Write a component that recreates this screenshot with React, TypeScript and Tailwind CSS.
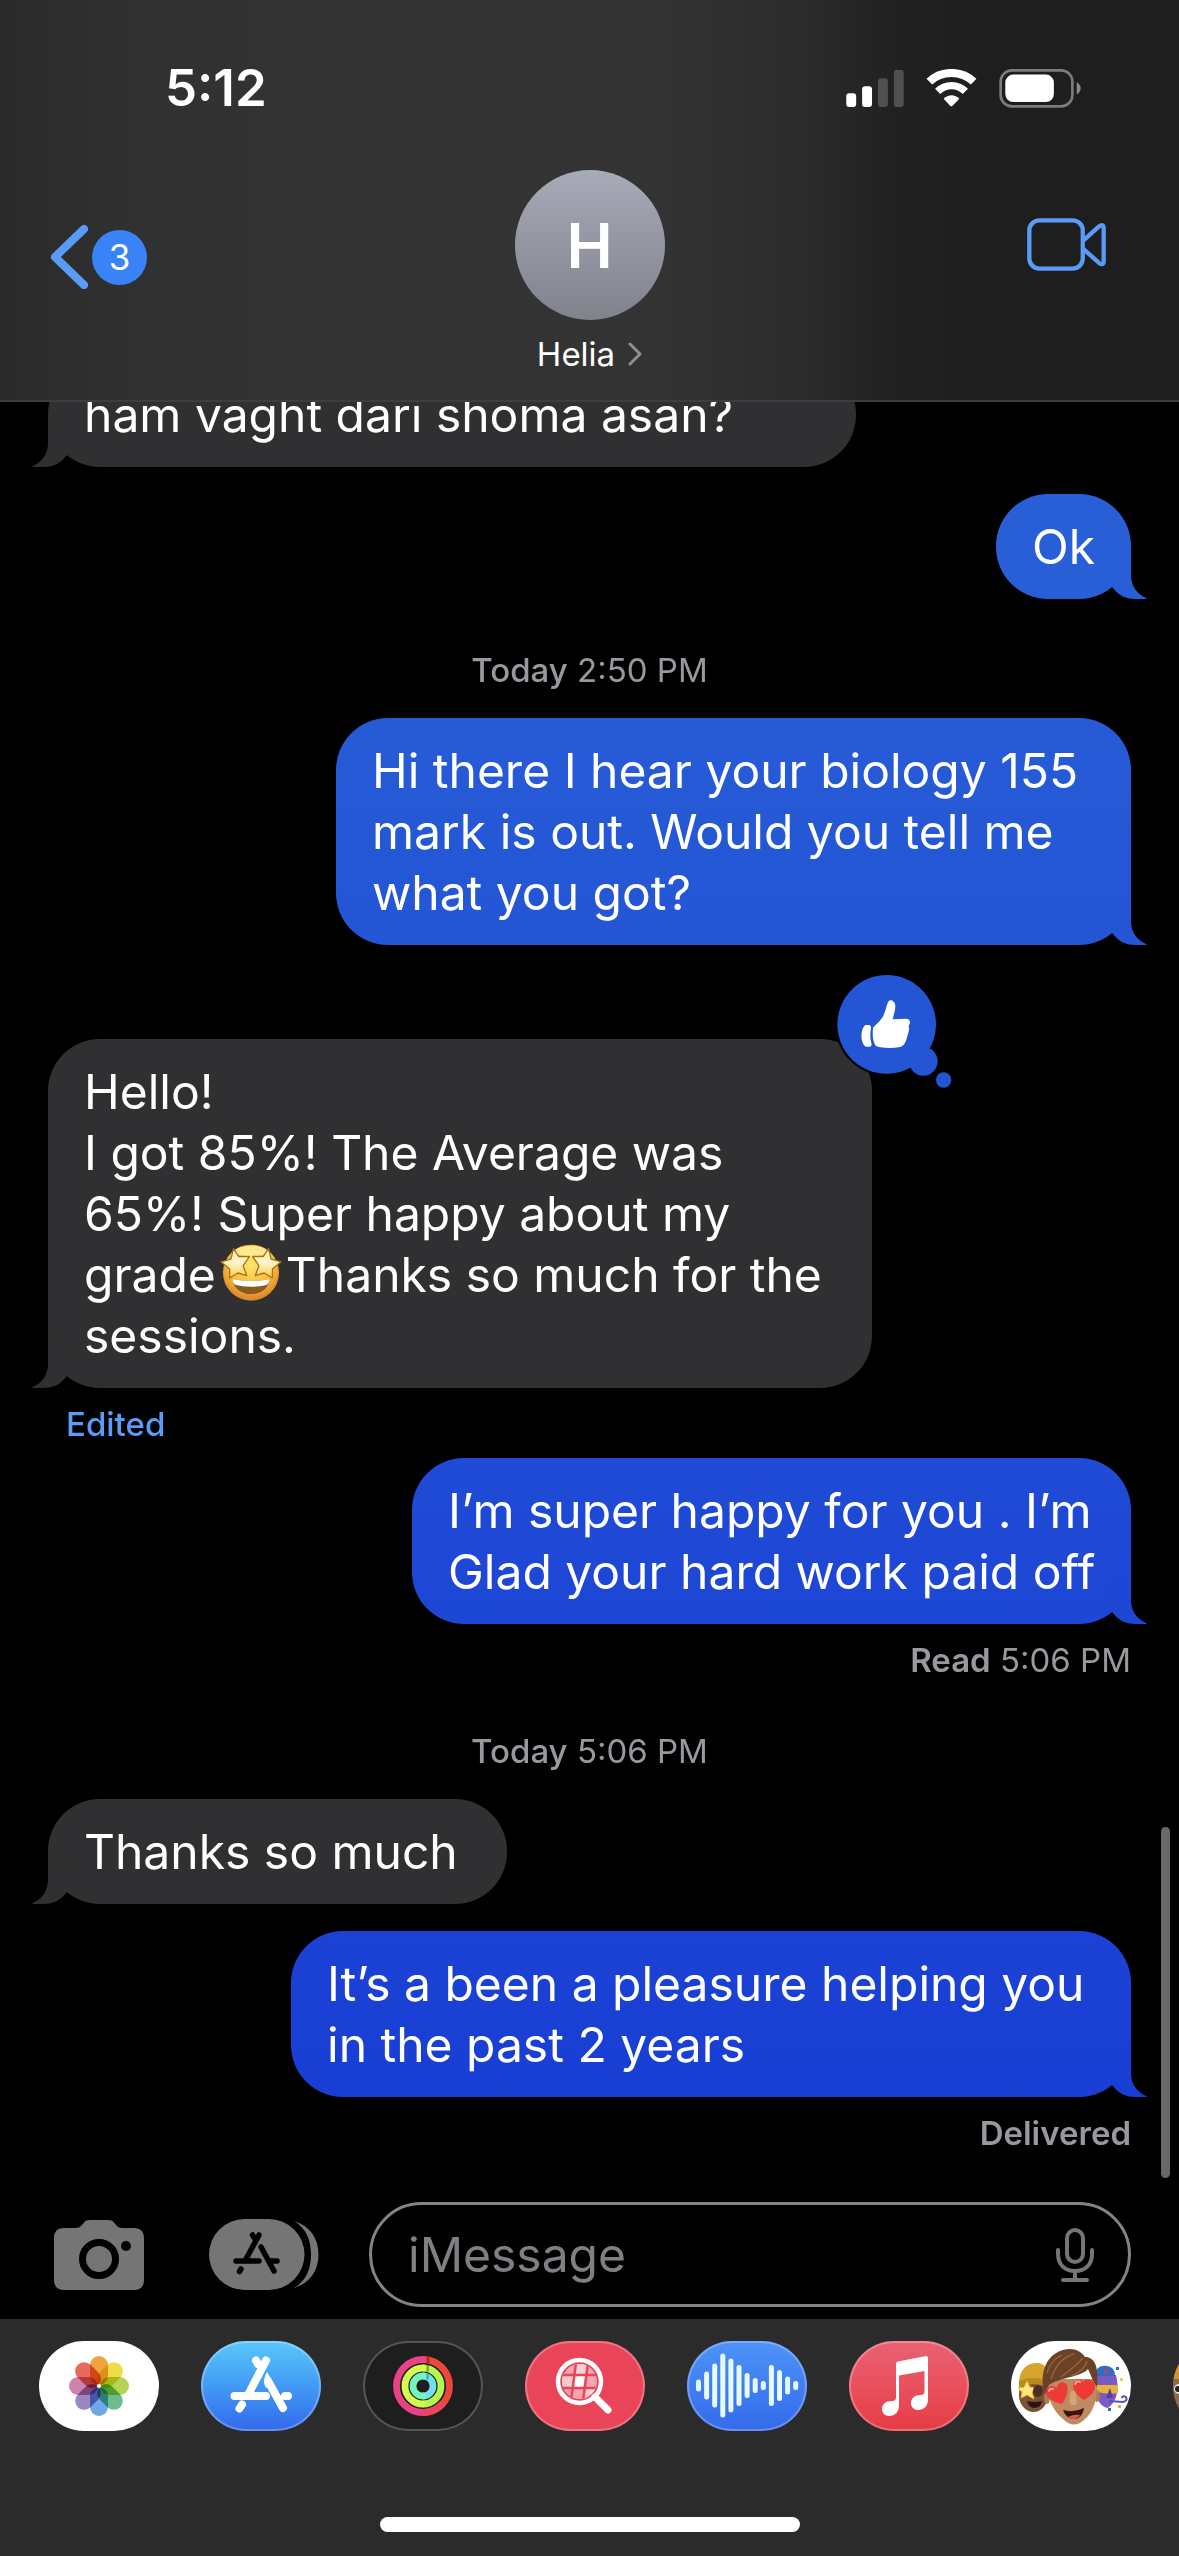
import type { ReactNode } from "react";

type Side = "in" | "out";

function Tail({ side, color }: { side: Side; color: string }) {
  return (
    <svg
      viewBox="0 0 40 50"
      aria-hidden="true"
      className={
        side === "in"
          ? `absolute bottom-0 -left-4 h-[50px] w-10 ${color}`
          : `absolute -right-4 bottom-0 h-[50px] w-10 -scale-x-100 ${color}`
      }
    >
      <path d="M16 0V26C16 37 10 45 1 49C0 49.600 0 50 1 50H11C21 50 28 47 35 38L40 10Z" fill="currentColor" />
    </svg>
  );
}

function Bubble({
  side,
  bg,
  tail,
  width = "",
  children,
}: {
  side: Side;
  bg: string;
  tail: string;
  width?: string;
  children: ReactNode;
}) {
  return (
    <div
      className={`relative rounded-[52px] px-9 py-[22px] text-[48px] leading-[61px] whitespace-nowrap text-white ${
        side === "in" ? "self-start" : "self-end"
      } ${bg} ${width}`}
    >
      <Tail side={side} color={tail} />
      <div className="relative">{children}</div>
    </div>
  );
}

function StarStruck() {
  return (
    <svg viewBox="600 16 188 176" role="img" aria-label="star-struck face" className="mx-1 inline-block h-[58px] w-[62px] align-[-10px]">
      <defs>
        <radialGradient id="face" cx="0.5" cy="0.35" r="0.65">
          <stop offset="0" stopColor="#ffe66b" />
          <stop offset="0.6" stopColor="#f7bd3a" />
          <stop offset="1" stopColor="#d9822b" />
        </radialGradient>
        <linearGradient id="star" x1="0" y1="0" x2="0" y2="1">
          <stop offset="0" stopColor="#fff6b4" />
          <stop offset="0.5" stopColor="#fdf3c8" />
          <stop offset="1" stopColor="#f5cf3e" />
        </linearGradient>
      </defs>
      <circle cx="694" cy="103" r="85" fill="url(#face)" />
      <ellipse cx="694" cy="38" rx="48" ry="16" fill="#fff0a0" opacity="0.8" />
      <path d="M638 122C670 130 720 130 750 122C749 150 724 168 694 168C664 168 639 150 638 122Z" fill="#8b5a1e" />
      <path d="M638 122C670 130 720 130 750 122C750 130 746 138 742 140C715 148 673 148 646 140C641 136 638 130 638 122Z" fill="#fff" />
      <path d="M641 30L657 54L689 54L670 82L681 112L654 104L629 119L629 92L603 70L633 62Z" fill="url(#star)" stroke="#a96f1a" strokeWidth="4" strokeLinejoin="round" />
      <path d="M747 30L755 62L785 70L759 92L759 119L734 104L707 112L718 82L699 54L731 54Z" fill="url(#star)" stroke="#a96f1a" strokeWidth="4" strokeLinejoin="round" />
    </svg>
  );
}

function ThumbReaction() {
  return (
    <svg viewBox="45 42 357 354" role="img" aria-label="Liked" className="absolute -top-[66px] -right-[82px] h-[118px] w-[119px]">
      <circle cx="200" cy="196" r="155" fill="#000" />
      <circle cx="200" cy="196" r="148" fill="#2355d5" />
      <circle cx="310" cy="307" r="43" fill="#2355d5" />
      <circle cx="371" cy="363" r="23" fill="#2355d5" />
      <path d="M160 205C175 190 185 181 190 170C198 152 200 136 205 128C212 118 226 126 226 142C226 156 220 170 218 181L260 179C272 180 272 193 266 200C270 216 263 224 261 235C258 248 252 262 240 264C215 269 185 267 170 262C158 254 156 220 160 205Z" fill="#fff" />
      <path d="M136 198H148Q154 199 153 207C150 222 150 238 154 252Q157 262 149 263H138C122 256 119 212 136 198Z" fill="#fff" />
    </svg>
  );
}

function StatusIcons() {
  return (
    <div className="flex items-center gap-[22px]">
      <svg viewBox="78 86 174 112" role="img" aria-label="Signal" className="h-[37px] w-[58px]">
        <rect x="78" y="156" width="30" height="42" rx="9" fill="#fff" />
        <rect x="126" y="135" width="30" height="63" rx="9" fill="#fff" />
        <rect x="174" y="111" width="30" height="87" rx="9" fill="#505052" />
        <rect x="222" y="86" width="30" height="112" rx="9" fill="#505052" />
      </svg>
      <svg viewBox="318 86 153 114" role="img" aria-label="Wi-Fi" className="h-[38px] w-[51px]">
        <path d="M328 124C364 89 424 89 461 124" fill="none" stroke="#fff" strokeWidth="24" />
        <path d="M353 153C376 130 413 130 436 153" fill="none" stroke="#fff" strokeWidth="22" />
        <path d="M371 175C384 161 405 161 418 175L397 197Q394 199 391 197Z" fill="#fff" />
      </svg>
      <svg viewBox="537 84 246 118" role="img" aria-label="Battery" className="h-[39px] w-[82px]">
        <rect x="541" y="88" width="217" height="109" rx="34" fill="none" stroke="#7c7c7c" strokeWidth="8" />
        <path d="M771 124C787 132 787 153 771 161Z" fill="#8a8a8a" />
        <rect x="555" y="101" width="147" height="83" rx="24" fill="#fff" />
      </svg>
    </div>
  );
}

function Header() {
  return (
    <header className="relative z-10 shrink-0 border-b-2 border-[#3e3e40] bg-[linear-gradient(to_right,#2a2a2b_0%,#313131_12%,#343434_35%,#333333_56%,#2b2b2b_68%,#212121_76%,#1e1e1e_84%)] pb-[26px] text-white">
      <div className="flex items-center justify-between pt-[62px] pr-[98px] pl-[165px]">
        <time className="text-[51px] leading-[52px] font-semibold">5:12</time>
        <StatusIcons />
      </div>
      <div className="grid grid-cols-3 pt-14">
        <button type="button" aria-label="Back, 3 unread" className="flex items-center gap-1 self-start pt-[55px] pl-[50px]">
          <svg viewBox="0 0 38 64" aria-hidden="true" className="h-16 w-[38px]">
            <path d="M34 4L5 32L34 60" fill="none" stroke="#5a9bf8" strokeWidth="8" strokeLinecap="round" strokeLinejoin="round" />
          </svg>
          <span className="flex size-[55px] items-center justify-center rounded-full bg-[#3a82f7] text-[35px] leading-[55px]">3</span>
        </button>
        <button type="button" className="flex flex-col items-center gap-[14px]">
          <span className="flex size-[150px] items-center justify-center rounded-full bg-linear-to-b from-[#a8abb8] to-[#80838c] text-[62px] font-semibold">
            H
          </span>
          <span className="flex items-center gap-[13px] text-[33px] leading-10">
            Helia
            <svg viewBox="0 0 14 24" aria-hidden="true" className="h-6 w-[14px]">
              <path d="M2 2L12 12L2 22" fill="none" stroke="#8e8e93" strokeWidth="3" strokeLinecap="round" strokeLinejoin="round" />
            </svg>
          </span>
        </button>
        <button type="button" aria-label="Video call" className="flex justify-end self-start pt-12 pr-[73px]">
          <svg viewBox="621 534 238 159" aria-hidden="true" className="h-[53px] w-[79px]">
            <g fill="none" stroke="#5a9bf8" strokeWidth="13" strokeLinejoin="round">
              <rect x="628" y="541" width="161" height="145" rx="30" />
              <path d="M792 600L838 559Q851 550 852 563V665Q851 678 838 669L792 628" />
            </g>
          </svg>
        </button>
      </div>
    </header>
  );
}

function Stamp({ day, time }: { day: string; time: string }) {
  return (
    <p className="mt-[51px] mb-7 text-center text-[33px] leading-10 text-[#98989f]">
      <span className="font-medium">{day}</span> {time}
    </p>
  );
}

function Messages() {
  return (
    <main className="relative flex min-h-0 flex-1 flex-col justify-end overflow-hidden px-12 pb-[25px]">
      <Bubble side="in" bg="bg-[#303032]" tail="text-[#303032]" width="w-[808px]">
        ham vaght dari shoma asan?
      </Bubble>
      <div className="h-[27px] shrink-0" />
      <Bubble side="out" bg="bg-[#285fd6]" tail="text-[#285fd6]">
        Ok
      </Bubble>
      <Stamp day="Today" time="2:50 PM" />
      <Bubble side="out" bg="bg-linear-to-b from-[#275bd6] to-[#2355d5]" tail="text-[#2355d5]" width="w-[795px]">
        Hi there I hear your biology 155
        <br />
        mark is out. Would you tell me
        <br />
        what you got?
      </Bubble>
      <div className="mt-[94px] flex flex-col">
        <Bubble side="in" bg="bg-[#303032]" tail="text-[#303032]" width="w-[824px]">
          Hello!
          <br />I got 85%! The Average was
          <br />
          65%! Super happy about my
          <br />
          grade
          <StarStruck />
          Thanks so much for the
          <br />
          sessions.
          <span className="absolute -top-[22px] -right-9 block">
            <span className="relative block">
              <ThumbReaction />
            </span>
          </span>
        </Bubble>
      </div>
      <button type="button" className="mt-4 mb-[14px] ml-[18px] self-start text-[33px] leading-10 font-medium text-[#5a9bf8]">
        Edited
      </button>
      <Bubble side="out" bg="bg-linear-to-b from-[#204bd6] to-[#1c46d4]" tail="text-[#1c46d4]" width="w-[719px]">
        I’m super happy for you . I’m
        <br />
        Glad your hard work paid off
      </Bubble>
      <p className="mt-4 self-end text-[33px] leading-10 text-[#98989f]">
        <span className="font-semibold">Read</span> 5:06 PM
      </p>
      <Stamp day="Today" time="5:06 PM" />
      <Bubble side="in" bg="bg-[#303032]" tail="text-[#303032]" width="w-[459px]">
        Thanks so much
      </Bubble>
      <div className="h-[27px] shrink-0" />
      <Bubble side="out" bg="bg-linear-to-b from-[#1b42d5] to-[#183ed3]" tail="text-[#183ed3]" width="w-[840px]">
        It’s a been a pleasure helping you
        <br />
        in the past 2 years
      </Bubble>
      <p className="mt-4 self-end text-[33px] leading-10 font-semibold text-[#98989f]">Delivered</p>
      <div className="absolute right-[9px] bottom-0 h-[351px] w-[9px] rounded-full bg-[#69696b]" />
    </main>
  );
}

function Composer() {
  return (
    <form className="flex shrink-0 items-center pt-6 pr-12 pb-3 pl-[54px]" onSubmit={(e) => e.preventDefault()}>
      <button type="button" aria-label="Camera" className="shrink-0">
        <svg viewBox="0 0 90 70" aria-hidden="true" className="h-[70px] w-[90px]">
          <path d="M10 8H22C26 8 28 5 30 2.500C31.500 .7 33 0 36 0H54C57 0 58.500 .7 60 2.500C62 5 64 8 68 8H80C87 8 90 12 90 18V60C90 67 86 70 80 70H10C4 70 0 67 0 60V18C0 12 3 8 10 8Z" fill="#757575" />
          <circle cx="45" cy="39" r="16.500" fill="none" stroke="#000" strokeWidth="7" />
          <circle cx="72" cy="26" r="5" fill="#000" />
        </svg>
      </button>
      <button type="button" aria-label="Apps" className="ml-[65px] shrink-0">
        <svg viewBox="0 0 110 71" aria-hidden="true" className="h-[71px] w-[110px]">
          <rect width="95.500" height="71" rx="35.500" fill="#757575" />
          <path d="M85 2C101 7 109.500 19 109.500 35.500C109.500 52 101 64 85 69C97 62 102 50 102 35.500C102 21 97 9 85 2Z" fill="#757575" />
          <g stroke="#000" strokeWidth="5.500" strokeLinecap="round" fill="none">
            <path d="M50 16L36 42M43.500 16L46 20M27 42H50M60 42H68M52 28L65 52M32 50L30.500 52.500" />
          </g>
        </svg>
      </button>
      <div className="ml-[50px] flex h-[105px] min-w-0 flex-1 items-center rounded-full border-3 border-[#848488] pr-[34px] pl-9">
        <input
          type="text"
          aria-label="Message"
          placeholder="iMessage"
          className="min-w-0 flex-1 bg-transparent text-[48px] leading-[61px] text-white outline-none placeholder:text-[#7f7f84]"
        />
        <button type="button" aria-label="Dictate" className="shrink-0">
          <svg viewBox="0 0 38 54" aria-hidden="true" className="h-[54px] w-[38px]">
            <g fill="none" stroke="#757577" strokeWidth="4" strokeLinecap="round">
              <rect x="11" y="2" width="16" height="32" rx="8" />
              <path d="M2 22V26C2 37 9 43 19 43C29 43 36 37 36 26V22M19 43V51M7 52H31" />
            </g>
          </svg>
        </button>
      </div>
    </form>
  );
}

const PETALS = ["#eda63f", "#f0dc45", "#b3d455", "#6dbd8c", "#6fa8e6", "#9a86c0", "#cd83ac", "#e56b5d"];

function PhotosIcon() {
  return (
    <svg viewBox="0 0 120 90" aria-hidden="true" className="size-full">
      <g className="isolate">
        {PETALS.map((c, i) => (
          <rect
            key={c}
            x="51"
            y="15"
            width="18"height="29"
            rx="9"
            fill={c}
            transform={`rotate(${i * 45} 60 45)`}
            className="mix-blend-multiply"
          />
        ))}
      </g>
      <circle cx="60" cy="45" r="2" fill="#fff" />
    </svg>
  );
}

function StoreIcon() {
  return (
    <svg viewBox="0 0 120 90" aria-hidden="true" className="size-full">
      <g stroke="#fff" strokeWidth="8" strokeLinecap="round" fill="none">
        <path d="M65 19.500L48 52M55 19.500L57 23M33.500 55H65M84 55H87M67 40L82 67M41 63.500L38.500 67.500" />
      </g>
      <path d="M66 31L72 41L65 47C62 42 63 36 66 31Z" fill="#fff" />
    </svg>
  );
}

function ActivityIcon() {
  return (
    <svg viewBox="0 0 120 90" aria-hidden="true" className="size-full">
      <g fill="none" strokeWidth="6.800">
        <path d="M60 18.500A26.500 26.500 0 0 1 60 71.500" stroke="#ee4738" />
        <path d="M60 71.500A26.500 26.500 0 0 1 60 18.500" stroke="#ea4287" strokeLinecap="round" />
        <path d="M60 71.500A26.500 26.500 0 0 0 80 62" stroke="#ec4463" />
        <path d="M60 27A18 18 0 0 1 60 63" stroke="#b4f74e" />
        <path d="M60 63A18 18 0 0 1 60 27" stroke="#d4fb50" strokeLinecap="round" />
        <path d="M60 35A10 10 0 0 1 60 55" stroke="#70dff0" />
        <path d="M60 55A10 10 0 0 1 60 35" stroke="#75f4bd" strokeLinecap="round" />
      </g>
      <path d="M63.500 15.500h3v6.500h-3z" fill="#8a1d16" opacity="0.6" />
      <path d="M63.500 24h2.500v6.500h-2.500z" fill="#4f7a1c" opacity="0.6" />
      <path d="M63.500 32.500h2v6h-2z" fill="#2b7780" opacity="0.6" />
    </svg>
  );
}

function ImagesIcon() {
  return (
    <svg viewBox="0 0 120 90" aria-hidden="true" className="size-full">
      <defs>
        <clipPath id="globe">
          <circle cx="54.500" cy="40.500" r="17.500" />
        </clipPath>
      </defs>
      <g clipPath="url(#globe)">
        <rect x="36" y="22" width="38" height="38" fill="#f4a5b0" />
        <path d="M50 22H62L60 34H49Z" fill="#fad0d6" />
        <path d="M36 35H48L47 46H36Z" fill="#f8c9d0" />
        <path d="M61 46H74V60H58Z" fill="#f9cdd3" />
        <path d="M49.500 35H60L58.500 46H48Z" fill="#fff" />
        <path d="M36 34H74M36 47H74M51 22L46 60M63 22L58 60" stroke="#ea4459" strokeWidth="2.500" />
      </g>
      <circle cx="54.500" cy="40.500" r="21.500" fill="none" stroke="#fff" strokeWidth="4.500" />
      <path d="M70 56L83 69" stroke="#fff" strokeWidth="7" strokeLinecap="round" />
    </svg>
  );
}

const WAVE = [12, 28, 44, 64, 54, 41, 25, 15, 9, 41, 31, 18, 9];

function WaveIcon() {
  return (
    <svg viewBox="0 0 120 90" aria-hidden="true" className="size-full">
      {WAVE.map((h, i) => (
        <rect key={i} x={9 + i * 8.1} y={44.5 - h / 2} width="5" height={h} rx="2.500" fill="#e6fbff" />
      ))}
    </svg>
  );
}

function MusicIcon() {
  return (
    <svg viewBox="0 0 120 90" aria-hidden="true" className="size-full">
      <path d="M47 23Q47 21 49 20.500L77 15Q79 15 79 17V58C79 65 75 69 69 69C65 69 62 66 62 62C62 57 66 54 71 54C74.500 54 75.500 53 75.500 50V30L50 34.500V64C50 71 46 75 40 75C36 75 33 72 33 68C33 63 37 60 42 60C46 60 47 59 47 56Z" fill="#fff" />
    </svg>
  );
}

function MemojiIcon() {
  return (
    <svg viewBox="0 0 120 90" aria-hidden="true" className="size-full">
      <ellipse cx="22.500" cy="54" rx="14.500" ry="17" fill="#7b5136" />
      <path d="M8 46C7 30 15 22 26 22C34 22 38 28 38 46C28 40 18 40 8 46Z" fill="#d6a32b" />
      <path d="M8 40C16 36 30 36 38 40V47C28 42 18 42 8 47Z" fill="#b98a20" />
      <path d="M16 40L19 46L26 47L21 51L23 58L16 54L10 57L11 51L7 47L13 46Z" fill="#ffe680" stroke="#e3b330" />
      <ellipse cx="27" cy="50" rx="5" ry="6" fill="#4a2f24" />
      <path d="M16 60Q23 62 31 60Q30 67 23 67Q18 67 16 60Z" fill="#2b1512" />
      <path d="M86 34H105C108 46 107 60 97 67C90 66 86 60 85 50Z" fill="#7a5bc4" />
      <path d="M84 35C84 27 90 24 96 25C102 26 104 30 104 35Z" fill="#2f6cc8" />
      <circle cx="95" cy="30.500" r="2" fill="#e0364c" />
      <path d="M86 44H107V52Q98 54 86 51Z" fill="#e7b23c" />
      <path d="M99 47L102 57H95Z" fill="#5b3da6" />
      <path d="M98 60L112 61Q117 60 115 56Q112 54 110.500 57" fill="none" stroke="#5a50b8" strokeWidth="2" />
      <rect x="105" y="26" width="3" height="3" fill="#2f66d8" />
      <rect x="109" y="37" width="3" height="3" fill="#f0cf4e" />
      <rect x="107" y="64" width="3" height="3" fill="#e7a93c" />
      <rect x="97" y="67" width="3" height="3" fill="#2f66d8" />
      <ellipse cx="36" cy="57" rx="3" ry="6" fill="#b07a52" />
      <ellipse cx="86" cy="55" rx="3" ry="6" fill="#b07a52" />
      <path d="M36 38H86C87 56 83 71 74 78Q63 89 52 78C41 69 36 56 36 38Z" fill="#c08a60" />
      <path d="M32 46C30 26 38 13 52 9C62 6 70 10 74 16C84 16 88 26 86 46C82 41 80 34 77 28C70 36 50 36 38 44Q35 50 34 53Z" fill="#6b4127" />
      <path d="M40 38C44 25 52 16 63 13M50 36C58 30 66 24 72 17M60 35C68 32 74 27 76 20M36 32C38 24 44 17 51 14" fill="none" stroke="#95643c" strokeWidth="1.500" />
      <path d="M52 69Q63 72 73 67Q72 76 64 78Q55 78 52 69Z" fill="#3a1512" />
      <path d="M57 76Q63 73 69 74Q66 78 62 78Q59 78 57 76Z" fill="#e0575a" />
      <path d="M60 50Q57 62 60 64H65Q67 62 64 50Z" fill="#d6a277" />
      <path d="M51 63C43 61 35 58 35 51C35 45 42 43 46 47C46 41 53 39 56 44C58 50 55 57 51 63Z" fill="#ee3a34" />
      <path d="M73 59C67 55 61 49 62 43C64 37 70 37 72 41C75 37 82 38 84 44C85 50 79 56 73 59Z" fill="#ee3a34" />
      <path d="M38 50Q39 47 42 48M64 43Q66 39 69 41" fill="none" stroke="#ff9c94" strokeWidth="2" strokeLinecap="round" />
    </svg>
  );
}

function StickerIcon() {
  return (
    <svg viewBox="0 0 120 90" aria-hidden="true" className="size-full">
      <rect width="120" height="90" rx="45" fill="#8a6a50" />
      <path d="M0 38C4 22 14 8 30 4V38Z" fill="#d3932f" />
      <circle cx="6" cy="48" r="5" fill="#e8e8e8" />
      <circle cx="5" cy="48" r="3" fill="#222" />
    </svg>
  );
}

const APPS = [
  { name: "Photos", skin: "bg-white", icon: <PhotosIcon /> },
  { name: "App Store", skin: "bg-linear-to-b from-[#5ac8fa] to-[#3468eb] ring-2 ring-inset ring-white/25", icon: <StoreIcon /> },
  { name: "Activity", skin: "bg-[#1e1e1e] ring-2 ring-inset ring-[#555557]", icon: <ActivityIcon /> },
  { name: "Images", skin: "bg-[#ea4459] ring-2 ring-inset ring-white/25", icon: <ImagesIcon /> },
  { name: "Audio", skin: "bg-linear-to-b from-[#4f93f8] to-[#346aea] ring-2 ring-inset ring-white/25", icon: <WaveIcon /> },
  { name: "Music", skin: "bg-linear-to-b from-[#ea6175] to-[#e63b42] ring-2 ring-inset ring-white/25", icon: <MusicIcon /> },
  { name: "Memoji", skin: "bg-white", icon: <MemojiIcon /> },
  { name: "Stickers", skin: "bg-[#8a6a50]", icon: <StickerIcon /> },
];

function AppTray() {
  return (
    <footer className="shrink-0 bg-[#2b2b2b] pt-[22px] pb-6">
      <nav aria-label="iMessage apps" className="flex gap-[42px] overflow-hidden pl-[39px]">
        {APPS.map((app) => (
          <button key={app.name} type="button" aria-label={app.name} className={`h-[90px] w-[120px] shrink-0 overflow-hidden rounded-full ${app.skin}`}>
            {app.icon}
          </button>
        ))}
      </nav>
      <div className="mx-auto mt-[86px] h-[15px] w-[420px] rounded-full bg-white" />
    </footer>
  );
}

export default function App() {
  return (
    <div className="flex h-screen flex-col overflow-hidden bg-black font-['Inter',sans-serif]">
      <Header />
      <Messages />
      <Composer />
      <AppTray />
    </div>
  );
}
